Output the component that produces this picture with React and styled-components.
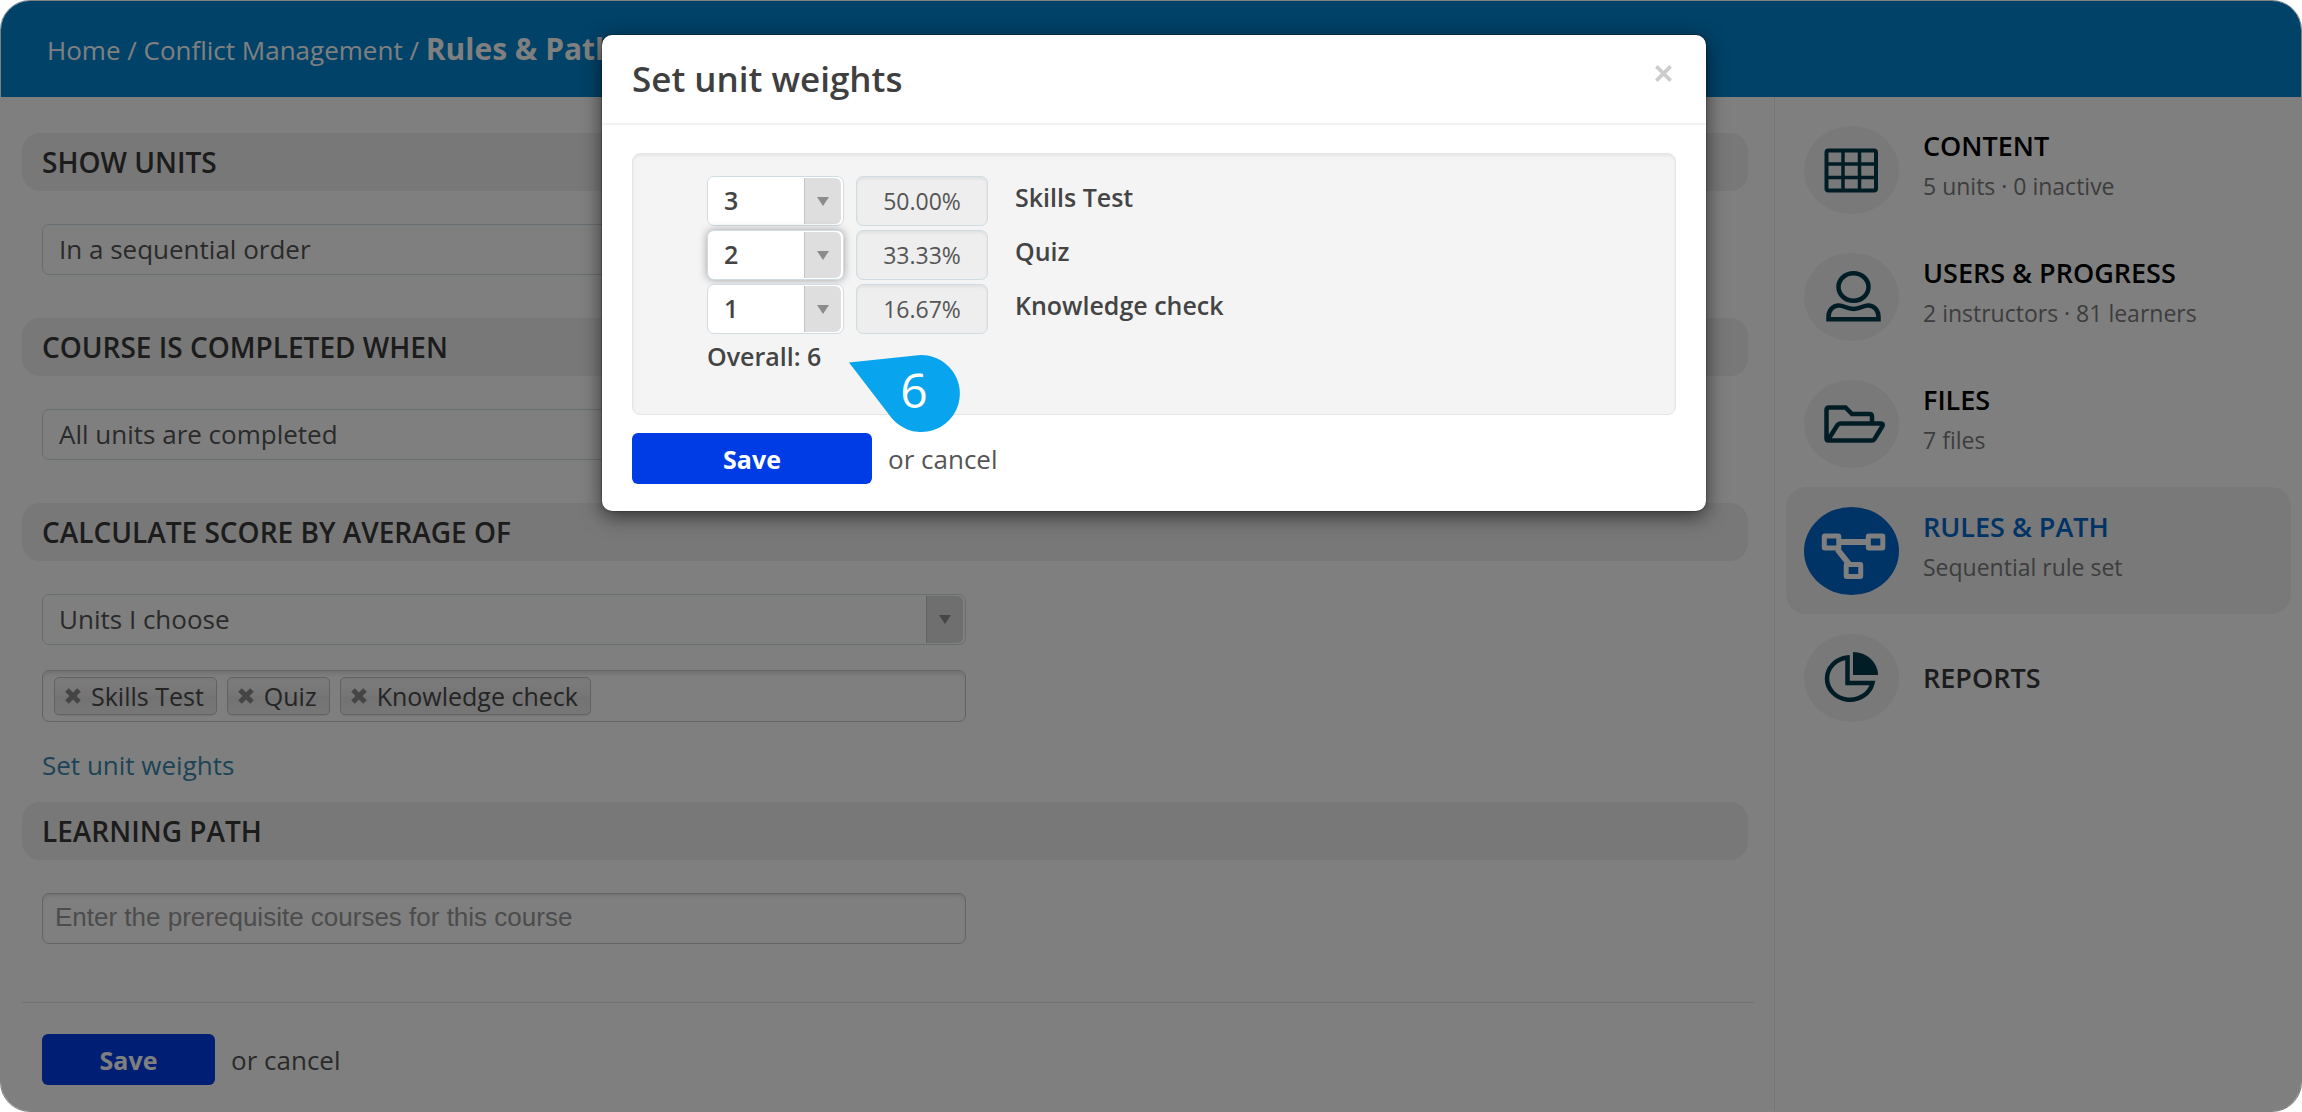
import { useState } from "react";
import styled, { createGlobalStyle, css } from "styled-components";

const GlobalStyle = createGlobalStyle`
  *,
  *::before,
  *::after {
    box-sizing: border-box;
  }

  body {
    margin: 0;
    background: #fff;
    color: #333;
    font-family: "Open Sans", "Noto Sans", sans-serif;
    font-size: 26px;
    line-height: 36px;
  }

  button,
  select,
  input {
    font: inherit;
    color: inherit;
  }
`;

const Page = styled.div`
  position: relative;
  display: flex;
  flex-direction: column;
  min-height: 100vh;
  overflow: hidden;
  border: 1px solid #808080;
  border-radius: 30px;
  background: #fff;
`;

const Header = styled.header`
  display: flex;
  align-items: center;
  height: 96px;
  padding: 0 46px;
  background: #0084d0;
  color: #fff;
`;

const Breadcrumb = styled.nav`
  a {
    color: inherit;
    text-decoration: none;
  }

  strong {
    font-size: 30px;
    font-weight: 700;
  }
`;

const Columns = styled.div`
  display: grid;
  grid-template-columns: minmax(0, 1fr) 527px;
  flex: 1;
`;

const Main = styled.main`
  padding: 36px 20px 24px 21px;
`;

const SectionTitle = styled.h2`
  margin: 0 6px 33px 0;
  padding: 0 20px;
  border-radius: 18px;
  background: #f0f0f0;
  color: #383838;
  font-size: 28px;
  font-weight: 600;
  line-height: 58px;
`;

const Fields = styled.div`
  display: flex;
  flex-direction: column;
  align-items: flex-start;
  gap: 25px;
  padding-left: 20px;
  margin-bottom: ${(props) => props.$space || 43}px;
`;

const SelectBox = styled.div`
  position: relative;
  width: ${(props) => props.$width || "54%"};
  height: ${(props) => (props.$small ? 50 : 51)}px;
  border: 1px solid #cfdce2;
  border-radius: 7px;
  background: #fff;
  ${(props) =>
    props.$focused &&
    css`
      box-shadow: 0 0 8px rgba(0, 0, 0, 0.35);
    `}
`;

const Select = styled.select`
  appearance: none;
  display: block;
  width: 100%;
  height: 100%;
  padding: 0 48px 2px 16px;
  border: 0;
  outline: 0;
  background: transparent;
  color: ${(props) => (props.$strong ? "#444" : "#555")};
  font-size: ${(props) => (props.$strong ? 25 : 26)}px;
  font-weight: ${(props) => (props.$strong ? 600 : 400)};
`;

const ArrowBox = styled.span`
  position: absolute;
  top: 1px;
  right: 2px;
  bottom: 1px;
  display: flex;
  align-items: center;
  justify-content: center;
  width: 37px;
  border-left: 1px solid #c4c4c4;
  border-radius: 0 6px 6px 0;
  background: #dedede;
  pointer-events: none;

  &::before {
    content: "";
    border: 6px solid transparent;
    border-top: 9px solid #8c8c8c;
    border-bottom: 0;
  }
`;

const TagInput = styled.div`
  display: flex;
  align-items: center;
  gap: 10px;
  width: 54%;
  height: 52px;
  padding: 0 11px;
  border: 1px solid #c8c8c8;
  border-radius: 7px;
  box-shadow: inset 0 4px 5px -2px rgba(0, 0, 0, 0.15);
`;

const Tag = styled.span`
  display: flex;
  align-items: center;
  gap: 10px;
  height: 38px;
  padding: 0 12px 0 10px;
  border: 1px solid #c4c4c4;
  border-radius: 5px;
  background: linear-gradient(#f4f4f4 20%, #ececec 50%, #e6e6e6 52%, #eee);
  box-shadow: 0 1px 1px rgba(0, 0, 0, 0.08);
  color: #4a4a4a;
  font-size: 25px;
`;

const RemoveTag = styled.button`
  display: flex;
  padding: 0;
  border: 0;
  background: none;
  color: #8a8a8a;
`;

const TextInput = styled.input`
  width: 54%;
  height: 51px;
  padding: 0 12px 2px;
  border: 1px solid #c8c8c8;
  border-radius: 7px;
  outline: 0;
  background: #fff;
  box-shadow: inset 0 3px 4px -2px rgba(0, 0, 0, 0.15);
  font-family: "Liberation Sans", Arial, sans-serif;
  font-size: 26px;

  &::placeholder {
    color: #999;
    opacity: 1;
  }
`;

const Link = styled.a`
  color: #3a87ad;
  text-decoration: none;
`;

const Actions = styled.div`
  display: flex;
  align-items: center;
  gap: 16px;
  color: #555;
`;

const PageActions = styled(Actions)`
  padding: 31px 0 0 20px;
  border-top: 1px solid #e4e4e4;
`;

const SaveButton = styled.button`
  width: ${(props) => (props.$wide ? 240 : 173)}px;
  height: 51px;
  border: 0;
  border-radius: 6px;
  background: #003ce6;
  color: #fff;
  font-size: 25px;
  font-weight: 700;
`;

const CancelLink = styled.a`
  color: inherit;
  text-decoration: none;
`;

const Sidebar = styled.aside`
  padding: 9px 10px 0 11px;
  border-left: 1px solid #ebebeb;
`;

const SideItem = styled.a`
  display: flex;
  align-items: center;
  gap: 24px;
  height: 127px;
  padding: 0 18px;
  border-radius: 20px;
  background: ${(props) => (props.$active ? "#f2f2f2" : "transparent")};
  text-decoration: none;
`;

const IconCircle = styled.span`
  display: flex;
  flex: none;
  width: 95px;
  height: 88px;
  border-radius: 50%;
  background: ${(props) => (props.$active ? "#0066cc" : "#f2f2f2")};
  color: ${(props) => (props.$active ? "#fff" : "#003a4c")};
`;

const SideText = styled.span`
  display: flex;
  flex-direction: column;
`;

const SideTitle = styled.span`
  color: ${(props) => props.$color || "#000"};
  font-size: 27px;
  font-weight: 600;
  line-height: 40px;
`;

const SideNote = styled.span`
  margin-bottom: 7px;
  color: #7a7a7a;
  font-size: 23px;
  line-height: 40px;
`;

const Overlay = styled.div`
  position: absolute;
  inset: 0;
  display: flex;
  align-items: flex-start;
  justify-content: center;
  padding-top: 34px;
  background: rgba(0, 0, 0, 0.5);
`;

const Modal = styled.section`
  width: 48%;
  min-width: 700px;
  margin-left: 6px;
  border-radius: 10px;
  background: #fff;
  box-shadow: 0 5px 20px rgba(0, 0, 0, 0.6), 0 0 2px rgba(0, 0, 0, 0.6);
`;

const ModalHeader = styled.div`
  display: flex;
  align-items: flex-start;
  justify-content: space-between;
  padding: 0 30px;
  border-bottom: 2px solid #f2f2f2;
`;

const ModalTitle = styled.h1`
  margin: 0;
  color: #3f3f3f;
  font-size: 35px;
  font-weight: 600;
  line-height: 88px;
`;

const CloseButton = styled.button`
  display: flex;
  align-items: center;
  height: 76px;
  padding: 0 3px;
  border: 0;
  background: none;
  color: #ccc;
`;

const ModalBody = styled.div`
  position: relative;
  padding: 28px 30px 27px;
`;

const Well = styled.div`
  display: flex;
  flex-direction: column;
  gap: 4px;
  margin-bottom: 18px;
  padding: 22px 20px 40px 74px;
  border: 1px solid #e5e5e5;
  border-radius: 8px;
  background: #f4f4f4;
  box-shadow: inset 0 2px 3px rgba(0, 0, 0, 0.06);
  color: #444;
  font-size: 25px;
  font-weight: 600;
`;

const WeightRow = styled.div`
  display: flex;
  gap: 12px;
`;

const Percent = styled.output`
  width: 132px;
  height: 50px;
  border: 1px solid #cfdce2;
  border-radius: 7px;
  background: #eee;
  box-shadow: inset 0 2px 3px rgba(0, 0, 0, 0.06);
  color: #555;
  font-size: 23px;
  font-weight: 400;
  line-height: 48px;
  text-align: center;
`;

const UnitName = styled.label`
  padding-left: 15px;
  line-height: 42px;
`;

const Callout = styled.svg`
  position: absolute;
  top: 228px;
  left: 247px;
`;

function CrossIcon({ size, weight }) {
  return (
    <svg width={size} height={size} viewBox="0 0 16 16" aria-hidden="true">
      <path d="M2 2L14 14M14 2L2 14" stroke="currentColor" strokeWidth={weight} />
    </svg>
  );
}

const icons = {
  content: (
    <g strokeWidth="4">
      <rect x="22.5" y="24.5" width="49.5" height="40" rx="2" />
      <path d="M39 24V65M55.5 24V65M22 38H72M22 51.5H72" strokeWidth="3.5" />
    </g>
  ),
  users: (
    <g strokeWidth="4.5">
      <ellipse cx="49.5" cy="34" rx="15" ry="13.8" />
      <path d="M24.5 66.2V64C24.5 57 29 53 34 52.5C40 52 42 56 49.5 56C57 56 59 52 65 52.5C70 53 74.5 57 74.5 64V66.2Z" />
    </g>
  ),
  files: (
    <g strokeWidth="4.5">
      <path d="M68 43V36.5Q68 34 65.5 34H48L41.5 27.5H25Q22.5 27.5 22.5 30V58.5Q22.5 60.5 24.5 60.5H68Q69.5 60.5 70.5 59L78.5 46Q79.5 43.5 77 43.5H36.5Q34.5 43.5 33.5 45L24 60" />
    </g>
  ),
  rules: (
    <g strokeWidth="5">
      <rect x="20.3" y="29" width="14.5" height="12" rx="0.5" />
      <rect x="64.3" y="29" width="14.5" height="12" rx="0.5" />
      <rect x="42.2" y="57.5" width="14.5" height="12" rx="0.5" />
      <path d="M36 35H63M33.5 42.5L45 57" strokeWidth="6" />
    </g>
  ),
  reports: (
    <g strokeWidth="4.5">
      <path d="M43.5 23.5V49H68.5A23 21.2 0 1 1 43.5 23.5Z" />
      <path d="M49 18A25 23 0 0 1 74 41H49Z" fill="currentColor" stroke="none" />
    </g>
  ),
};

const menu = [
  { id: "content", title: "CONTENT", note: "5 units · 0 inactive" },
  { id: "users", title: "USERS & PROGRESS", note: "2 instructors · 81 learners" },
  { id: "files", title: "FILES", note: "7 files" },
  { id: "rules", title: "RULES & PATH", note: "Sequential rule set", color: "#0066cc" },
  { id: "reports", title: "REPORTS", color: "#383838" },
];

const initialUnits = [
  { id: "skills", name: "Skills Test", weight: 3 },
  { id: "quiz", name: "Quiz", weight: 2 },
  { id: "knowledge", name: "Knowledge check", weight: 1 },
];

function Dropdown({ label, options }) {
  return (
    <SelectBox>
      <Select aria-label={label}>
        {options.map((option) => (
          <option key={option}>{option}</option>
        ))}
      </Select>
      <ArrowBox />
    </SelectBox>
  );
}

function WeightsModal() {
  const [units, setUnits] = useState(initialUnits);
  const total = units.reduce((sum, unit) => sum + unit.weight, 0);

  function handleChange(event) {
    const { id, value } = event.target;
    setUnits(
      units.map((unit) =>
        unit.id === id ? { ...unit, weight: Number(value) } : unit
      )
    );
  }

  return (
    <Modal role="dialog" aria-labelledby="weights-title">
      <ModalHeader>
        <ModalTitle id="weights-title">Set unit weights</ModalTitle>
        <CloseButton type="button" aria-label="Close">
          <CrossIcon size={19} weight={3} />
        </CloseButton>
      </ModalHeader>
      <ModalBody>
        <Well>
          {units.map((unit) => (
            <WeightRow key={unit.id}>
              <SelectBox $width="137px" $small $focused={unit.id === "quiz"}>
                <Select
                  $strong
                  id={unit.id}
                  value={unit.weight}
                  onChange={handleChange}
                >
                  <option>1</option>
                  <option>2</option>
                  <option>3</option>
                  <option>4</option>
                  <option>5</option>
                </Select>
                <ArrowBox />
              </SelectBox>
              <Percent htmlFor={unit.id}>
                {((unit.weight / total) * 100).toFixed(2)}%
              </Percent>
              <UnitName htmlFor={unit.id}>{unit.name}</UnitName>
            </WeightRow>
          ))}
          <div>Overall: {total}</div>
        </Well>
        <Actions>
          <SaveButton type="button" $wide>
            Save
          </SaveButton>
          <span>
            or <CancelLink href="#cancel">cancel</CancelLink>
          </span>
        </Actions>
        <Callout width="112" height="80" viewBox="0 0 112 80">
          <path
            d="M0 9.5L69 2.2A38.5 38.5 0 1 1 43 65.5Z"
            fill="#08a5ee"
          />
          <text x="65" y="55" fill="#fff" fontSize="48" textAnchor="middle">
            6
          </text>
        </Callout>
      </ModalBody>
    </Modal>
  );
}

export default function App() {
  return (
    <>
      <GlobalStyle />
      <Page>
        <Header>
          <Breadcrumb>
            <a href="#home">Home</a> / <a href="#course">Conflict Management</a>{" "}
            / <strong>Rules &amp; Path</strong>
          </Breadcrumb>
        </Header>
        <Columns>
          <Main>
            <SectionTitle>SHOW UNITS</SectionTitle>
            <Fields>
              <Dropdown
                label="Show units"
                options={["In a sequential order", "In any order"]}
              />
            </Fields>
            <SectionTitle>COURSE IS COMPLETED WHEN</SectionTitle>
            <Fields>
              <Dropdown
                label="Course is completed when"
                options={["All units are completed"]}
              />
            </Fields>
            <SectionTitle>CALCULATE SCORE BY AVERAGE OF</SectionTitle>
            <Fields $space={19}>
              <Dropdown
                label="Calculate score by average of"
                options={["Units I choose", "All units"]}
              />
              <TagInput>
                {initialUnits.map((unit) => (
                  <Tag key={unit.id}>
                    <RemoveTag type="button" aria-label={"Remove " + unit.name}>
                      <CrossIcon size={16} weight={5} />
                    </RemoveTag>
                    {unit.name}
                  </Tag>
                ))}
              </TagInput>
              <Link href="#weights">Set unit weights</Link>
            </Fields>
            <SectionTitle>LEARNING PATH</SectionTitle>
            <Fields $space={58}>
              <TextInput
                type="text"
                aria-label="Learning path"
                placeholder="Enter the prerequisite courses for this course"
              />
            </Fields>
            <PageActions>
              <SaveButton type="button">Save</SaveButton>
              <span>
                or <CancelLink href="#cancel">cancel</CancelLink>
              </span>
            </PageActions>
          </Main>
          <Sidebar>
            {menu.map((item) => (
              <SideItem
                key={item.id}
                href={"#" + item.id}
                $active={item.id === "rules"}
              >
                <IconCircle $active={item.id === "rules"}>
                  <svg
                    width="95"
                    height="88"
                    viewBox="0 0 95 88"
                    fill="none"
                    stroke="currentColor"
                    aria-hidden="true"
                  >
                    {icons[item.id]}
                  </svg>
                </IconCircle>
                <SideText>
                  <SideTitle $color={item.color}>{item.title}</SideTitle>
                  {item.note && <SideNote>{item.note}</SideNote>}
                </SideText>
              </SideItem>
            ))}
          </Sidebar>
        </Columns>
        <Overlay>
          <WeightsModal />
        </Overlay>
      </Page>
    </>
  );
}
